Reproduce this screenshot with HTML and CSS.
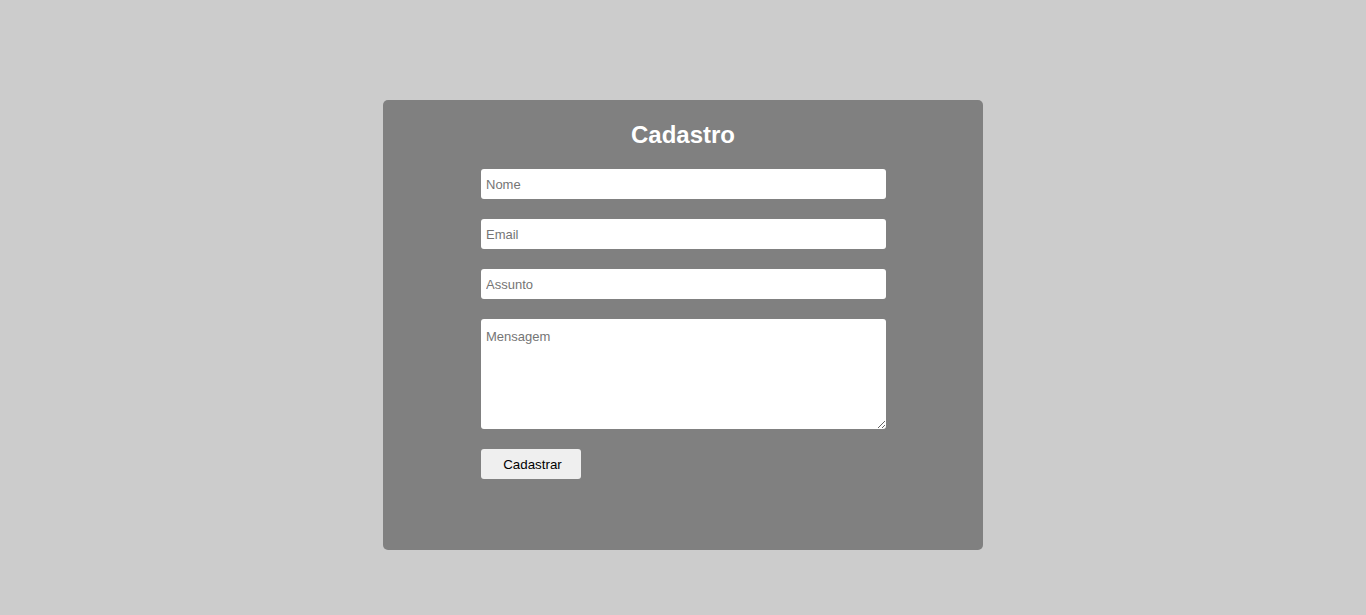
FILE: index.html
```html
<!DOCTYPE html>
<html lang="pt">
<head>
<meta charset="utf-8">
<title>Cadastro</title>
<link rel="stylesheet" href="styles.css">
</head>
<body>
<div class="page">
  <div class="card">
    <h2 class="title">Cadastro</h2>
    <form class="form">
      <input class="field" type="text" placeholder="Nome">
      <input class="field" type="email" placeholder="Email">
      <input class="field" type="text" placeholder="Assunto">
      <textarea class="field area" placeholder="Mensagem"></textarea>
      <button class="btn" type="button">Cadastrar</button>
    </form>
  </div>
</div>
</body>
</html>
```
FILE: styles.css
```css
html, body {
  margin: 0;
  padding: 0;
  background: #cccccc;
  font-family: "Liberation Sans", Arial, sans-serif;
}
.page {
  display: flex;
  justify-content: center;
  padding-top: 100px;
}
.card {
  width: 600px;
  height: 450px;
  box-sizing: border-box;
  background: #808080;
  border-radius: 5px;
  padding: 21px 0 0 98px;
}
.title {
  margin: 0 98px 20px 0;
  text-align: center;
  color: #ffffff;
  font-size: 24px;
  line-height: 28px;
  font-weight: bold;
}
.form {
  display: flex;
  flex-direction: column;
  gap: 20px;
  width: 405px;
}
.field {
  display: block;
  box-sizing: border-box;
  width: 405px;
  height: 30px;
  border: none;
  border-radius: 3px;
  background: #ffffff;
  padding: 0 5px;
  font-family: "Liberation Sans", Arial, sans-serif;
  font-size: 13px;
  color: #000;
  outline: none;
}
.field::placeholder {
  color: #757575;
}
.area {
  height: 110px;
  padding: 10px 5px;
  resize: vertical;
}
.btn {
  box-sizing: border-box;
  width: 100px;
  height: 30px;
  border: none;
  border-radius: 3px;
  background: #efefef;
  color: #000;
  font-family: "Liberation Sans", Arial, sans-serif;
  font-size: 13.33px;
  padding: 0 0 0 3px;
}
```
